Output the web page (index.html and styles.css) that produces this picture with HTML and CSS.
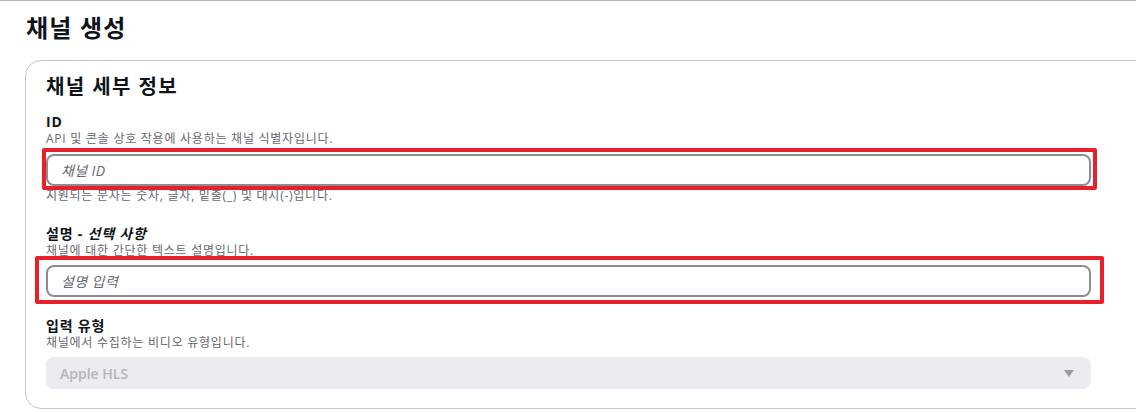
FILE: index.html
```html
<!DOCTYPE html>
<html lang="ko">
<head>
<meta charset="utf-8">
<title>채널 생성</title>
<link rel="stylesheet" href="styles.css">
</head>
<body>
<div class="page">
  <h1 class="page-title">채널 생성</h1>
  <section class="card">
    <h2 class="card-title">채널 세부 정보</h2>

    <div class="field field-id">
      <label class="label" for="cid">ID</label>
      <div class="desc">API 및 콘솔 상호 작용에 사용하는 채널 식별자입니다.</div>
      <div class="control">
        <input id="cid" class="input" type="text" placeholder="채널 ID">
        <span class="highlight hl-one"></span>
      </div>
      <div class="constraint">지원되는 문자는 숫자, 글자, 밑줄(_) 및 대시(-)입니다.</div>
    </div>

    <div class="field field-desc">
      <label class="label" for="cdesc">설명 - <i>선택 사항</i></label>
      <div class="desc">채널에 대한 간단한 텍스트 설명입니다.</div>
      <div class="control">
        <input id="cdesc" class="input" type="text" placeholder="설명 입력">
        <span class="highlight hl-two"></span>
      </div>
    </div>

    <div class="field field-type">
      <div class="label">입력 유형</div>
      <div class="desc">채널에서 수집하는 비디오 유형입니다.</div>
      <div class="control">
        <div class="select">
          <span class="select-value">Apple HLS</span>
          <span class="caret"></span>
        </div>
      </div>
    </div>
  </section>
</div>
</body>
</html>
```
FILE: styles.css
```css
* { box-sizing: border-box; }

html, body {
  margin: 0;
  padding: 0;
  background: #ffffff;
  overflow: hidden;
}

body {
  font-family: "Open Sans", "Noto Sans CJK KR", sans-serif;
  color: #0f141a;
  width: 1136px;
  height: 412px;
}

.page {
  border-top: 1px solid #b4b4bb;
  padding: 12px 0 0 25px;
}

.page-title {
  margin: 0;
  padding-left: 1px;
  font-size: 24px;
  line-height: 30px;
  font-weight: 700;
  letter-spacing: 1.2px;
}

.card {
  margin-top: 17px;
  width: 1160px;
  border: 1px solid #c6c6cd;
  border-radius: 16px;
  padding: 14px 0 19px 20px;
}

.card-title {
  margin: 0;
  font-size: 20px;
  line-height: 24px;
  font-weight: 700;
  letter-spacing: 1.4px;
}

.field {
  display: flex;
  flex-direction: column;
  width: 1045px;
}

.field-id { margin-top: 14px; }
.field-desc { margin-top: 21px; }
.field-type { margin-top: 20px; }

.label {
  font-size: 14px;
  line-height: 18px;
  font-weight: 700;
  letter-spacing: 0.8px;
}

.label i {
  font-style: italic;
}

.desc, .constraint {
  font-size: 12px;
  line-height: 16px;
  color: #656871;
  letter-spacing: 0.75px;
}

.control {
  position: relative;
  margin-top: 7px;
}

.field-desc .control { margin-top: 6px; }
.field-type .control { margin-top: 6px; }

.constraint {
  margin-top: 2px;
}

.input {
  display: block;
  width: 100%;
  height: 32px;
  border: 2px solid #8c8c94;
  border-radius: 8px;
  padding: 0 13px;
  font-family: "Open Sans", "Noto Sans CJK KR", sans-serif;
  font-size: 14px;
  letter-spacing: 0.4px;
  background: #ffffff;
  outline: none;
}

.input::placeholder {
  color: #656871;
  font-style: italic;
}

.highlight {
  position: absolute;
  border: 4px solid #e8202b;
  border-radius: 2px;
  pointer-events: none;
}

.hl-one {
  left: -4px;
  right: -6px;
  top: -6px;
  bottom: -4px;
}

.hl-two {
  left: -11px;
  right: -13px;
  top: -9px;
  bottom: -7px;
}

.select {
  display: flex;
  align-items: center;
  justify-content: space-between;
  height: 32px;
  border-radius: 8px;
  background: #ebebf0;
  padding: 0 17px 0 14px;
}

.select-value {
  font-size: 14px;
  color: #b4b4bb;
  font-weight: 600;
}

.caret {
  width: 0;
  height: 0;
  border-left: 5px solid transparent;
  border-right: 5px solid transparent;
  border-top: 7px solid #9c9ca3;
  margin-top: 1px;
}
```
